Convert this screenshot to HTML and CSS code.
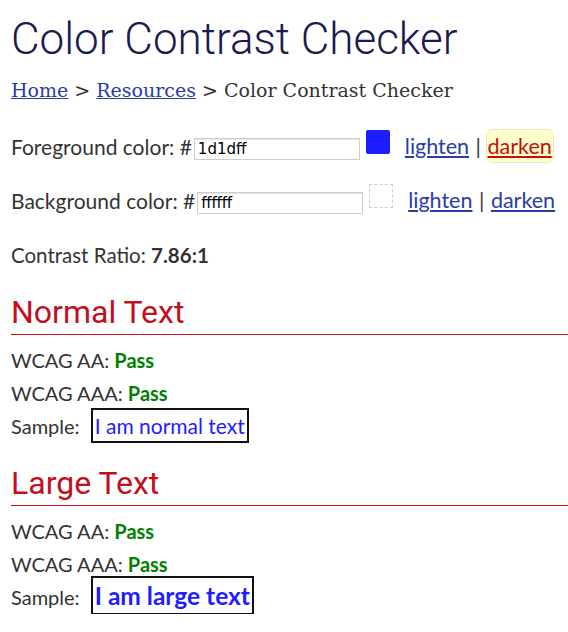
FILE: index.html
```html
<!DOCTYPE html>
<html lang="en">

<head>
	<meta charset="UTF-8">
	<title>Color Contrast Checker</title>
	<link rel="stylesheet" href="styles.css">
</head>

<body>
	<h1 class="title">Color Contrast Checker</h1>
	<p class="crumbs"><a href="#">Home</a> &gt; <a href="#">Resources</a> &gt; Color Contrast Checker</p>

	<form class="picker">
		<div class="row">
			<label for="fg">Foreground color: #</label>
			<input type="text" id="fg" class="hex" value="1d1dff">
			<span class="swatch swatch-fg"></span>
			<span class="tools"><a href="#">lighten</a> | <a href="#" class="active">darken</a></span>
		</div>
		<div class="row">
			<label for="bg">Background color: #</label>
			<input type="text" id="bg" class="hex" value="ffffff">
			<span class="swatch swatch-bg"></span>
			<span class="tools"><a href="#">lighten</a> | <a href="#">darken</a></span>
		</div>
	</form>

	<p class="ratio">Contrast Ratio: <b>7.86:1</b></p>

	<section class="result">
		<h2>Normal Text</h2>
		<p>WCAG AA: <b class="pass">Pass</b></p>
		<p>WCAG AAA: <b class="pass">Pass</b></p>
		<p>Sample: <span class="sample">I am normal text</span></p>
	</section>

	<section class="result">
		<h2>Large Text</h2>
		<p>WCAG AA: <b class="pass">Pass</b></p>
		<p>WCAG AAA: <b class="pass">Pass</b></p>
		<p>Sample: <span class="sample sample-large">I am large text</span></p>
	</section>
</body>

</html>
```

FILE: styles.css
```css
body {
	font-family: Lato, "Open Sans", sans-serif;
	font-size: 20px;
	color: #333;
	background-color: #fff;
	margin: 0;
	padding: 0 0 0 11px;
}

a {
	color: #2a3ca6;
}

.title {
	font-family: Roboto, sans-serif;
	font-weight: 300;
	font-size: 44px;
	color: #1b1b50;
	margin: 12px 0 0;
	line-height: 54px;
}

.crumbs {
	font-family: "DejaVu Serif", serif;
	font-size: 19px;
	margin: 12px 0 0;
	line-height: 24px;
}

.picker {
	display: flex;
	flex-direction: column;
	gap: 22px;
	margin-top: 28px;
}

.row {
	display: flex;
	align-items: center;
	height: 32px;
	font-size: 21px;
}

.hex {
	font-family: "DejaVu Sans", sans-serif;
	font-size: 15px;
	width: 158px;
	height: 18px;
	padding: 1px 3px;
	border: 1px solid #ccc;
	box-shadow: inset 0 1px 1px #e5e5e5;
	margin: 5px 0 0 2px;
}

.swatch {
	width: 22px;
	height: 22px;
	margin: -9px 14px 0 6px;
	border: 1px dashed #ccc;
}

.swatch-fg {
	background-color: #1d1dff;
	border-color: #1d1dff;
	border-radius: 2px;
}

.tools {
	font-size: 21.5px;
}

.tools a {
	padding: 3px 1px;
	border-radius: 6px;
}

.tools a.active {
	color: #c40d0d;
	background-color: #ffffcc;
	box-shadow: 0 0 0 1px #eee8c0;
}

.ratio {
	margin: 24px 0 0;
	line-height: 30px;
	font-size: 20.5px;
}

.result h2 {
	font-family: Roboto, sans-serif;
	font-weight: normal;
	font-size: 32px;
	color: #c20f1d;
	margin: 22px 0 9px;
	padding-bottom: 2px;
	line-height: 40px;
	border-bottom: 1px solid #c8101e;
}

.result + .result h2 {
	margin-top: 20px;
}

.result p {
	margin: 0;
	line-height: 33px;
}

.pass {
	color: #008000;
}

.sample {
	color: #1d1dff;
	border: 2px solid #111;
	padding: 3px 2px;
	margin-left: 6px;
	font-size: 21px;
	line-height: 20px;
}

.sample-large {
	font-size: 24.5px;
	font-weight: bold;
}
```
